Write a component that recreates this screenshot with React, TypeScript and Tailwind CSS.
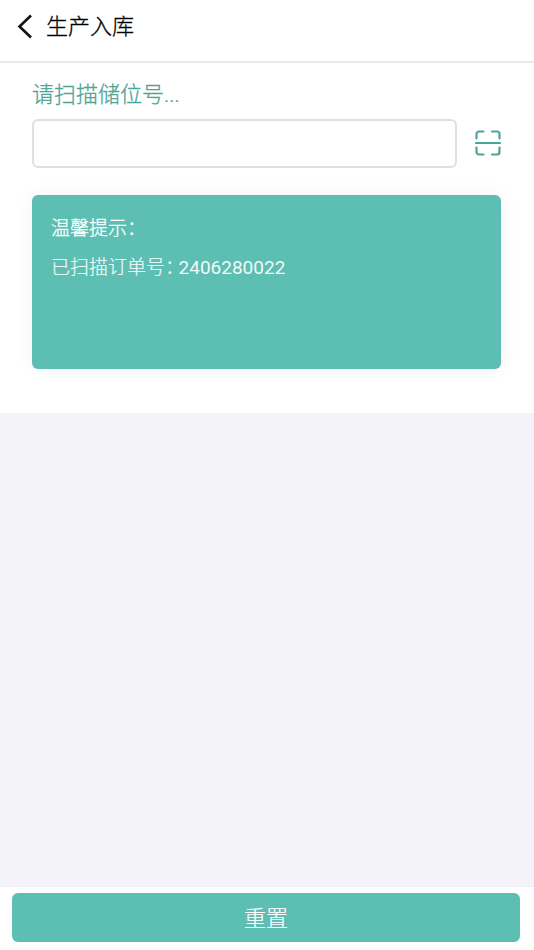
import { useState } from "react";

function BackIcon() {
  return (
    <svg width="16" height="26" viewBox="0 0 16 26" fill="none" stroke="#111" strokeWidth="2.6" aria-hidden="true">
      <path d="M15 1.500 3.500 12.500 15 23.500" />
    </svg>
  );
}

function ScanIcon() {
  return (
    <svg width="26" height="26" viewBox="0 0 26 26" fill="none" stroke="#4da597" strokeWidth="2.2" strokeLinecap="round" aria-hidden="true">
      <path d="M1.500 8.500V4a2.500 2.500 0 0 1 2.500-2.500H8.500M17 1.500h5a2.500 2.500 0 0 1 2.500 2.500v4.500M24.500 17.500V22a2.500 2.500 0 0 1-2.500 2.500h-5M8.500 24.500H4A2.500 2.500 0 0 1 1.500 22v-4.500M1 13h24" />
    </svg>
  );
}

function Colon() {
  return <span className="mr-1 [font-feature-settings:'halt']">：</span>;
}

export default function App() {
  const [location, setLocation] = useState("");

  return (
    <div className="flex min-h-screen flex-col bg-[#f4f3f9] font-[Roboto,'Noto_Sans_CJK_SC',sans-serif] font-light">
      <header className="flex h-[63px] items-start border-b-2 border-[#e8e8e8] bg-white px-4 pt-3">
        <div className="flex items-center gap-3.5">
          <button type="button" aria-label="返回">
            <BackIcon />
          </button>
          <h1 className="text-[22px] leading-[30px] text-black [-webkit-text-stroke:0.3px]">生产入库</h1>
        </div>
      </header>

      <main className="flex-1">
        <section className="bg-white pt-[17px] pr-[33px] pb-11 pl-8">
          <label htmlFor="location" className="block text-[22px] leading-[30px] text-[#4da597] [-webkit-text-stroke:0.3px]">
            请扫描储位号...
          </label>
          <div className="mt-[9px] flex items-center gap-[18px]">
            <input
              id="location"
              value={location}
              onChange={(event) => setLocation(event.target.value)}
              className="h-[49px] min-w-0 flex-1 rounded-md border-2 border-[#e0e0e0] bg-white px-3 text-xl outline-none"
            />
            <button type="button" aria-label="扫描" className="pb-0.5">
              <ScanIcon />
            </button>
          </div>

          <div className="mt-[27px] min-h-[174px] rounded-md bg-[#5dbeb3] px-[19px] pt-3.5 text-[19px] leading-[39px] text-white shadow-[0_0_20px_rgba(0,0,0,0.05)]">
            <p className="[-webkit-text-stroke:0.3px]">
              温馨提示<Colon />
            </p>
            <p className="text-[#effaf8]">
              <span className="[-webkit-text-stroke:0.2px]">
                已扫描订单号<Colon />
              </span>
              <span className="font-normal">2406280022</span>
            </p>
          </div>
        </section>
      </main>

      <footer className="border-t border-[#eeecf1] bg-white pt-1.5 pr-3.5 pb-2 pl-3">
        <button type="button" className="h-[49px] w-full rounded-md bg-[#5dbeb3] pt-0.5 text-[22px] text-white [-webkit-text-stroke:0.2px]">
          重置
        </button>
      </footer>
    </div>
  );
}
